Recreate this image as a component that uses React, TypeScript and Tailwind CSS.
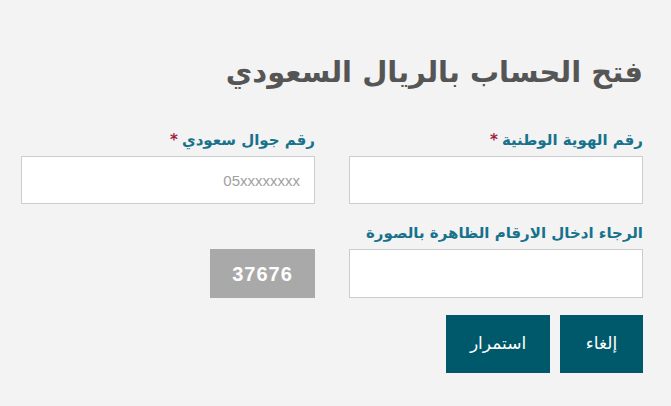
import React, { useState } from 'react';

const Field: React.FC<{ label: string; required?: boolean; children: React.ReactNode }> = ({ label, required, children }) => (
  <div className="flex flex-col">
    <label className="text-[15px] leading-[22px] font-bold text-[#17728c] mb-[5px] h-[22px]">
      {label}
      {required && <span className="text-[#a52340] mr-1">*</span>}
    </label>
    {children}
  </div>
);

export default function App() {
  const [nid, setNid] = useState('');
  const [mobile, setMobile] = useState('');
  const [captcha, setCaptcha] = useState('');

  return (
    <div
      dir="rtl"
      className="w-[671px] h-[406px] bg-[#f3f3f3] pr-[28px] pl-[21px] pt-[50px]"
      style={{ fontFamily: '"DejaVu Sans", "Noto Sans", sans-serif' }}
    >
      <h1 className="text-[29px] leading-[44px] font-bold text-[#555555] mb-[35px]">فتح الحساب بالريال السعودي</h1>

      <div className="grid grid-cols-2 gap-x-[34px]">
        <Field label="رقم الهوية الوطنية" required>
          <input
            value={nid}
            onChange={(e) => setNid(e.target.value)}
            className="h-[48px] bg-white border border-[#cccccc] px-3 text-sm outline-none"
          />
        </Field>
        <Field label="رقم جوال سعودي" required>
          <input
            value={mobile}
            onChange={(e) => setMobile(e.target.value)}
            placeholder="05xxxxxxxx"
            className="h-[48px] bg-white border border-[#cccccc] px-[14px] text-[15px] outline-none placeholder:text-[#a0a0a0]"
            style={{ fontFamily: '"Liberation Sans", sans-serif' }}
          />
        </Field>

        <div className="mt-[18px]">
          <Field label="الرجاء ادخال الارقام الظاهرة بالصورة">
            <input
              value={captcha}
              onChange={(e) => setCaptcha(e.target.value)}
              className="h-[49px] bg-white border border-[#cccccc] px-3 text-sm outline-none"
            />
          </Field>
        </div>
        <div className="mt-[18px] flex items-end">
          <div
            className="w-[105px] h-[49px] bg-[#a9a9a9] flex items-center justify-center text-white text-[20px] font-bold tracking-[1px]"
            style={{ fontFamily: '"Liberation Sans", sans-serif' }}
          >
            37676
          </div>
        </div>
      </div>

      <div className="flex gap-[10px] mt-[17px]">
        <button className="w-[83px] h-[58px] bg-[#00596b] text-white text-[17px]">إلغاء</button>
        <button className="w-[104px] h-[58px] bg-[#00596b] text-white text-[17px]">استمرار</button>
      </div>
    </div>
  );
}
